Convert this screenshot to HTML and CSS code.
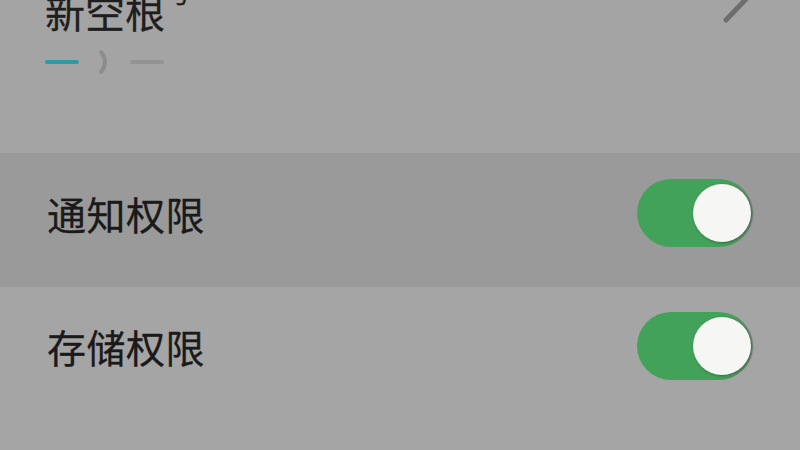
FILE: index.html
```html
<!DOCTYPE html>
<html lang="zh">
<head>
<meta charset="utf-8">
<link rel="stylesheet" href="styles.css">
</head>
<body>
<div class="screen">
  <header class="head">
    <div class="head-left">
      <div class="title">新空根<span class="cut">号</span></div>
      <div class="indicator">
        <span class="dash dash-active"></span>
        <svg class="arc" width="14" height="26" viewBox="0 0 14 26"><path d="M3 3 Q11 13 3 23" fill="none" stroke="#8d8d8d" stroke-width="4" stroke-linecap="round"/></svg>
        <span class="dash dash-idle"></span>
      </div>
    </div>
    <svg class="edit" width="30" height="26" viewBox="0 0 30 26"><path d="M27 -2 L6 20" stroke="#6d6d6d" stroke-width="5" stroke-linecap="round"/></svg>
  </header>
  <div class="row row-hl">
    <span class="label">通知权限</span>
    <span class="toggle"><span class="knob"></span></span>
  </div>
  <div class="row row-2">
    <span class="label">存储权限</span>
    <span class="toggle"><span class="knob"></span></span>
  </div>
</div>
</body>
</html>
```
FILE: styles.css
```css
html, body {
  margin: 0;
  padding: 0;
  background: #a5a5a5;
}
.screen {
  width: 800px;
  height: 450px;
  overflow: hidden;
  background: #a5a5a5;
  font-family: "Noto Sans CJK SC", "Noto Sans", sans-serif;
  color: #1b1b1b;
}
.head {
  height: 153px;
  display: flex;
  justify-content: space-between;
  align-items: flex-start;
  padding: 0 50px 0 45px;
  box-sizing: border-box;
  background: #a4a4a4;
}
.head-left {
  display: flex;
  flex-direction: column;
}
.title {
  font-size: 40px;
  line-height: 40px;
  height: 40px;
  margin-top: -9px;
  white-space: nowrap;
  color: #1e1e1e;
  -webkit-text-stroke: 0.3px #1e1e1e;
}
.cut {
  font-size: 26px;
  line-height: 0;
  vertical-align: 0.95em;
}
.indicator {
  display: flex;
  align-items: center;
  margin-top: 18px;
  height: 26px;
}
.dash {
  display: block;
  width: 34px;
  height: 4px;
  border-radius: 2px;
}
.dash-active {
  background: #2b9ba6;
}
.arc {
  display: block;
  margin: 0 18px 0 19px;
}
.dash-idle {
  background: #939393;
}
.edit {
  display: block;
  margin-top: 0;
}
.row {
  display: flex;
  align-items: center;
  justify-content: space-between;
  padding: 0 47px 0 47px;
  box-sizing: border-box;
}
.row-hl {
  height: 134px;
  padding-bottom: 14px;
  background: #9a9a9a;
}
.row-2 {
  height: 122px;
  padding-bottom: 4px;
  background: #a5a5a5;
}
.label {
  font-size: 39px;
  line-height: 1;
  letter-spacing: 0.5px;
  color: #1a1a1a;
  -webkit-text-stroke: 0.3px #1a1a1a;
}
.toggle {
  position: relative;
  display: block;
  width: 116px;
  height: 68px;
  border-radius: 34px;
  background: linear-gradient(90deg, #43a25a 0%, #43a25a 78%, #6f8a76 100%);
}
.knob {
  position: absolute;
  right: 2px;
  top: 5px;
  width: 58px;
  height: 58px;
  border-radius: 50%;
  background: #f6f6f4;
  box-shadow: 1px 1px 3px rgba(40, 40, 40, 0.45);
}
```
